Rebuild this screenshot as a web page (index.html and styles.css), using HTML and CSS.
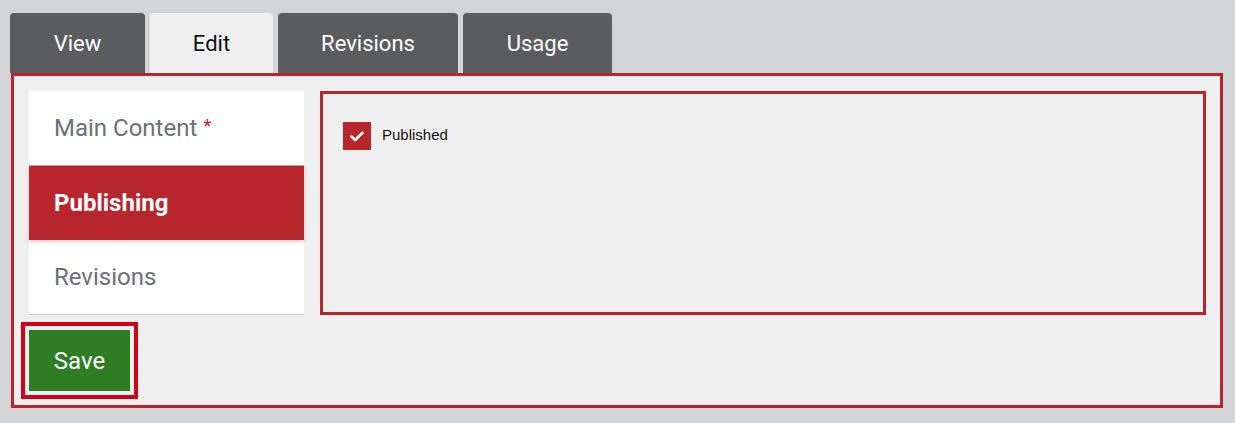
FILE: index.html
```html
<!DOCTYPE html>
<html lang="en">
<head>
<meta charset="utf-8">
<title>Edit</title>
<link rel="stylesheet" href="styles.css">
</head>
<body>
<div class="page">
  <nav class="tabs">
    <a class="tab">View</a>
    <a class="tab active">Edit</a>
    <a class="tab">Revisions</a>
    <a class="tab">Usage</a>
  </nav>
  <section class="panel">
    <div class="layout">
      <ul class="sidenav">
        <li class="item">Main Content <span class="req">*</span></li>
        <li class="item selected">Publishing</li>
        <li class="item">Revisions</li>
      </ul>
      <div class="content">
        <label class="check">
          <span class="box">
            <svg width="14" height="11" viewBox="0 0 14 11"><path d="M1.5 5.5 L5.2 9 L12.5 1.8" fill="none" stroke="#fff" stroke-width="2.6" stroke-linecap="round" stroke-linejoin="round"/></svg>
          </span>
          <span class="label">Published</span>
        </label>
      </div>
    </div>
    <button class="save">Save</button>
  </section>
</div>
</body>
</html>
```
FILE: styles.css
```css
* { box-sizing: border-box; }
html, body { margin: 0; padding: 0; }
body {
  background: #d3d4d6;
  font-family: Roboto, "Liberation Sans", sans-serif;
  width: 1235px;
  height: 423px;
  overflow: hidden;
}
.page { padding: 13px 12px 0 11px; }
.tabs {
  display: flex;
  gap: 5px;
  margin-left: -1px;
}
.tab {
  height: 60px;
  display: flex;
  align-items: center;
  justify-content: center;
  background: #5b5c5e;
  color: #fff;
  font-size: 22px;
  border-radius: 4px 4px 0 0;
}
.tab:nth-child(1) { width: 135px; }
.tab:nth-child(2) { width: 123px; }
.tab:nth-child(3) { width: 180px; }
.tab:nth-child(4) { width: 149px; }
.tab.active { background: #efefef; color: #111; }
.panel {
  background: #efefef;
  border: 3px solid #b8262d;
  padding: 15px 14px 14px 15px;
  height: 335px;
}
.layout {
  display: flex;
  gap: 16px;
  align-items: flex-start;
}
.sidenav {
  list-style: none;
  margin: 0;
  padding: 0;
  width: 275px;
  background: #fff;
  border-bottom: 1px solid #cfcfcf;
}
.item {
  height: 74px;
  display: flex;
  align-items: center;
  padding-left: 25px;
  font-size: 24px;
  color: #6b7177;
}
.item .req { color: #e0161e; margin-left: 6px; font-size: 19px; margin-bottom: 6px; }
.item.selected {
  background: #b8262d;
  color: #fff;
  font-weight: 700;
  border-top: 1px solid #a9a9a9;
  height: 75px;
  box-shadow: 0 2px 4px rgba(0,0,0,0.18);
  position: relative;
}
.content {
  flex: 1;
  height: 224px;
  border: 3px solid #b8262d;
  padding: 28px 20px;
}
.check {
  display: flex;
  align-items: center;
  gap: 11px;
}
.box {
  width: 28px;
  height: 28px;
  background: #b8262d;
  display: flex;
  align-items: center;
  justify-content: center;
}
.label {
  font-family: "Liberation Sans", Arial, sans-serif;
  font-size: 15px;
  color: #111;
  margin-bottom: 3px;
}
.save {
  margin-top: 15px;
  width: 101px;
  height: 61px;
  background: #2e7d23;
  color: #fff;
  border: 0;
  font-family: Roboto, "Liberation Sans", sans-serif;
  font-size: 24px;
  outline: 4px solid #d0021b;
  outline-offset: 4px;
  padding: 0;
}
```
